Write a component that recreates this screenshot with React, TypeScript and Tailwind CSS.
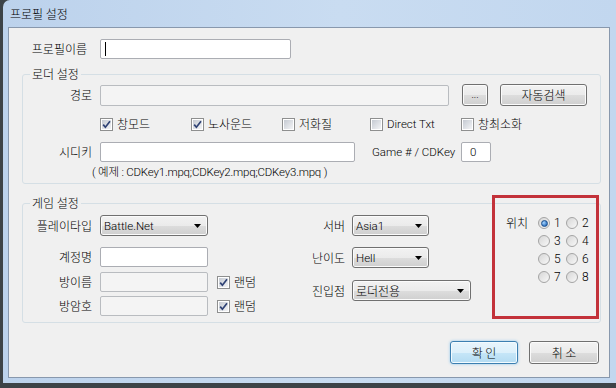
import React from "react";

const KR = "font-['Noto_Sans_CJK_KR',sans-serif] text-[12px] leading-[16px] font-light text-black";
const LAT = "font-['Roboto','Noto_Sans_CJK_KR',sans-serif] font-light text-black";

const inputBase = "h-[20px] shrink-0 rounded-[2px] border border-[#abadb3] bg-white";
const inputOff = "h-[20px] shrink-0 rounded-[2px] border border-[#b9bcc0] bg-[#f4f4f4]";
const btnSkin =
  "flex shrink-0 items-center rounded-[3px] border border-[#707070] bg-[linear-gradient(#f2f2f2_0%,#ebebeb_50%,#dddddd_51%,#cfcfcf_100%)] shadow-[inset_0_0_0_1px_#fbfbfb]";
const btnBase = `${btnSkin} justify-center`;

function Check({ checked }: { checked?: boolean }) {
  return (
    <span className="flex h-[13px] w-[13px] shrink-0 items-center justify-center border border-[#8e8f8f] bg-white p-[1px]">
      <span className="relative h-full w-full bg-[linear-gradient(135deg,#c5cad2,#f3f4f6)]">
        {checked && (
          <svg className="absolute left-0 top-0" width="9" height="9" viewBox="0 0 9 9">
            <path d="M1.2 4.6 L3.4 7.2 L8 1.2" fill="none" stroke="#2f4275" strokeWidth="1.7" />
          </svg>
        )}
      </span>
    </span>
  );
}

function Radio({ checked, n }: { checked?: boolean; n: number }) {
  return (
    <span className="flex w-[28px] items-center gap-[4px]">
      <span className="flex h-[12px] w-[12px] shrink-0 items-center justify-center rounded-full border border-[#a4a4a4] bg-[linear-gradient(135deg,#d6d6d6,#f8f8f8)]">
        {checked && (
          <span className="h-[7px] w-[7px] rounded-full border border-[#1c4f8c] bg-[radial-gradient(circle_at_35%_35%,#a8d6ff,#2b6fbe_75%)]" />
        )}
      </span>
      <span className={`${LAT} text-[12px] leading-[16px]`}>{n}</span>
    </span>
  );
}

function Select({ value, className, latin }: { value: string; className: string; latin?: boolean }) {
  return (
    <div className={`${btnSkin} h-[21px] justify-between pl-[3px] pr-[6px] ${className}`}>
      <span className={latin ? `${LAT} text-[11.5px] leading-[14px]` : KR}>{value}</span>
      <svg width="7" height="4" viewBox="0 0 7 4">
        <polygon points="0,0 7,0 3.5,4" fill="#000" />
      </svg>
    </div>
  );
}

function CheckItem({ label, checked, w, latin }: { label: string; checked?: boolean; w: string; latin?: boolean }) {
  return (
    <div className={`flex items-center gap-[4px] ${w}`}>
      <Check checked={checked} />
      <span className={latin ? `${LAT} text-[11.5px] leading-[14px]` : KR}>{label}</span>
    </div>
  );
}

export default function App() {
  return (
    <div className="h-[388px] w-[616px] overflow-hidden bg-[#3d4347]">
      <div className="ml-[3px] flex h-[383px] w-[613px] flex-col rounded-tl-[7px] bg-[linear-gradient(to_right,#bcd2ec,#c9dcf1_55%,#c2d7ef)] pb-[5px] pl-[5px] pr-[6px]">
        {/* title bar */}
        <div className="flex h-[27px] items-center pl-[2px]">
          <span className={`${KR} text-[#10202e]`}>프로필 설정</span>
        </div>

        {/* client area */}
        <div className="flex-1 border border-[#8898ad] bg-[#f0f0f0]">
          <div className="mt-[11px] flex h-[20px] items-center pl-[13px]">
            <span className={`${KR} w-[65px] text-right`}>프로필이름</span>
            <div className={`${inputBase} ml-[13px] flex w-[191px] items-center`}>
              <span className="ml-[4px] h-[14px] w-[1px] bg-black" />
            </div>
          </div>

          {/* 로더 설정 */}
          <fieldset className="ml-[13px] mt-[7px] w-[579px] rounded-[3px] border border-[#d5dfe5] pb-[4px]">
            <legend className={`${KR} ml-[7px] px-[2px]`}>로더 설정</legend>

            <div className="mt-[2px] flex h-[22px] items-center">
              <span className={`${KR} w-[69px] text-right`}>경로</span>
              <div className={`${inputOff} ml-[8px] h-[21px] w-[349px]`} />
              <div className={`${btnBase} ml-[13px] h-[22px] w-[26px]`}>
                <span className={`${LAT} text-[10px] leading-[12px] text-[#444]`}>...</span>
              </div>
              <div className={`${btnBase} ml-[12px] h-[22px] w-[87px]`}>
                <span className={KR}>자동검색</span>
              </div>
            </div>

            <div className="mt-[10px] flex h-[16px] items-center pl-[77px]">
              <CheckItem label="창모드" checked w="w-[91px]" />
              <CheckItem label="노사운드" checked w="w-[91px]" />
              <CheckItem label="저화질" w="w-[88px]" />
              <CheckItem label="Direct Txt" w="w-[91px]" latin />
              <CheckItem label="창최소화" w="w-auto" />
            </div>

            <div className="mt-[10px] flex h-[20px] items-center">
              <span className={`${KR} w-[69px] text-right`}>시디키</span>
              <div className={`${inputBase} ml-[8px] w-[255px]`} />
              <span className={`${LAT} ml-[17px] w-[89px] text-[11.5px] leading-[14px]`}>Game # / CDKey</span>
              <div className={`${inputBase} flex w-[30px] items-center pl-[8px]`}>
                <span className={`${LAT} text-[11.5px] leading-[14px]`}>0</span>
              </div>
            </div>

            <div className="mt-[3px] flex h-[14px] items-center pl-[69px]">
              <span className={`${LAT} text-[11.5px] leading-[14px] tracking-[-0.2px]`}>
                ( 예제 : CDKey1.mpq;CDKey2.mpq;CDKey3.mpq )
              </span>
            </div>
          </fieldset>

          {/* 게임 설정 */}
          <fieldset className="ml-[13px] mt-[11px] w-[579px] rounded-[3px] border border-[#d5dfe5] pb-[6px]">
            <legend className={`${KR} ml-[7px] px-[2px]`}>게임 설정</legend>

            <div className="flex items-start">
              {/* left column */}
              <div className="flex w-[277px] flex-col">
                <div className="mt-[4px] flex h-[21px] items-center">
                  <span className={`${KR} w-[69px] text-right`}>플레이타입</span>
                  <Select value="Battle.Net" className="ml-[8px] w-[108px]" latin />
                </div>
                <div className="mt-[11px] flex h-[20px] items-center">
                  <span className={`${KR} w-[69px] text-right`}>계정명</span>
                  <div className={`${inputBase} ml-[8px] w-[108px]`} />
                </div>
                <div className="mt-[5px] flex h-[20px] items-center">
                  <span className={`${KR} w-[69px] text-right`}>방이름</span>
                  <div className={`${inputOff} ml-[8px] w-[108px]`} />
                  <div className="ml-[9px]">
                    <CheckItem label="랜덤" checked w="w-auto" />
                  </div>
                </div>
                <div className="mt-[4px] flex h-[20px] items-center">
                  <span className={`${KR} w-[69px] text-right`}>방암호</span>
                  <div className={`${inputOff} ml-[8px] w-[108px]`} />
                  <div className="ml-[9px]">
                    <CheckItem label="랜덤" checked w="w-auto" />
                  </div>
                </div>
              </div>

              {/* middle column */}
              <div className="flex w-[192px] flex-col">
                <div className="mt-[4px] flex h-[21px] items-center">
                  <span className={`${KR} w-[45px] text-right`}>서버</span>
                  <Select value="Asia1" className="ml-[7px] w-[77px]" latin />
                </div>
                <div className="mt-[11px] flex h-[21px] items-center">
                  <span className={`${KR} w-[45px] text-right`}>난이도</span>
                  <Select value="Hell" className="ml-[7px] w-[77px]" latin />
                </div>
                <div className="mt-[12px] flex h-[21px] items-center">
                  <span className={`${KR} w-[45px] text-right`}>진입점</span>
                  <Select value="로더전용" className="ml-[7px] w-[119px]" />
                </div>
              </div>

              {/* right column: 위치 */}
              <div className="relative flex-1 pl-[14px]">
                <div className="mt-[3px] flex">
                  <span className={`${KR} w-[24px] leading-[18px]`}>위치</span>
                  <div className="ml-[8px] flex flex-col">
                    {[
                      [1, 2],
                      [3, 4],
                      [5, 6],
                      [7, 8],
                    ].map(([a, b]) => (
                      <div key={a} className="flex h-[18px] items-center">
                        <Radio n={a} checked={a === 1} />
                        <Radio n={b} />
                      </div>
                    ))}
                  </div>
                </div>
                {/* highlight annotation */}
                <div className="pointer-events-none absolute -top-[16px] left-0 h-[124px] w-[107px] border-[3px] border-[#c3323a]" />
              </div>
            </div>
          </fieldset>

          <div className="mt-[18px] flex justify-end gap-[11px] pr-[10px]">
            <div className="flex h-[23px] w-[68px] items-center justify-center rounded-[3px] border border-[#3c7fb1] bg-[linear-gradient(#e8f5fc_0%,#dcf0fb_50%,#c6e6f8_51%,#b3dbf2_100%)] shadow-[inset_0_0_0_1px_#f2fbff,0_0_3px_#8fc7ec]">
              <span className={KR}>확 인</span>
            </div>
            <div className={`${btnBase} h-[23px] w-[70px]`}>
              <span className={KR}>취 소</span>
            </div>
          </div>
        </div>
      </div>
    </div>
  );
}
